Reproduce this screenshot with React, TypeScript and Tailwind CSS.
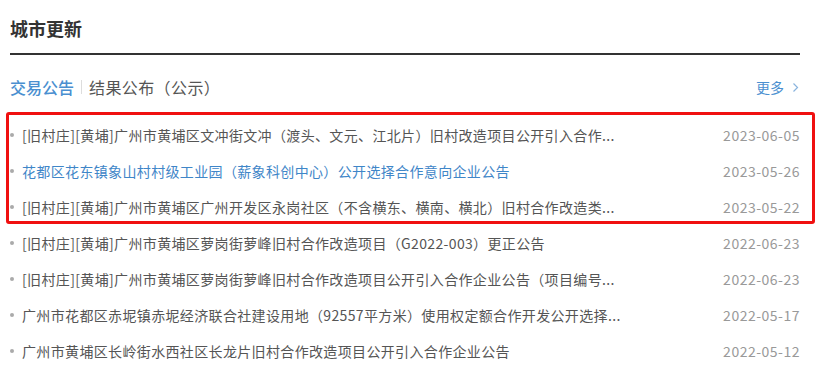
import React from 'react';

const rows = [
  { title: '[旧村庄][黄埔]广州市黄埔区文冲街文冲（渡头、文元、江北片）旧村改造项目公开引入合作...', date: '2023-06-05' },
  { title: '花都区花东镇象山村村级工业园（薪象科创中心）公开选择合作意向企业公告', date: '2023-05-26', active: true },
  { title: '[旧村庄][黄埔]广州市黄埔区广州开发区永岗社区（不含横东、横南、横北）旧村合作改造类...', date: '2023-05-22' },
  { title: '[旧村庄][黄埔]广州市黄埔区萝岗街萝峰旧村合作改造项目（G2022-003）更正公告', date: '2022-06-23' },
  { title: '[旧村庄][黄埔]广州市黄埔区萝岗街萝峰旧村合作改造项目公开引入合作企业公告（项目编号...', date: '2022-06-23' },
  { title: '广州市花都区赤坭镇赤坭经济联合社建设用地（92557平方米）使用权定额合作开发公开选择...', date: '2022-05-17' },
  { title: '广州市黄埔区长岭街水西社区长龙片旧村合作改造项目公开引入合作企业公告', date: '2022-05-12' },
];

export default function App() {
  return (
    <div
      className="w-[818px] h-[380px] bg-white overflow-hidden px-[10px]"
      style={{ fontFamily: '"Microsoft YaHei", "Noto Sans CJK SC", sans-serif' }}
    >
      <div className="w-[790px]">
        <div className="h-[53px] pt-[15px]">
          <h2 className="text-[18px] leading-[26px] font-bold text-[#333]">城市更新</h2>
        </div>
        <div className="h-[2px] bg-[#333]" />

        <div className="flex items-center justify-between h-[62px] pt-[2px]">
          <div className="flex items-center">
            <span className="text-[16px] text-[#4a8fd0] font-medium">交易公告</span>
            <span className="mx-[7px] w-px h-[14px] bg-[#ddd]" />
            <span className="text-[16px] text-[#555] tracking-[0.4px]">结果公布（公示）</span>
          </div>
          <div className="flex items-center text-[14px] text-[#4a8fd0]">
            <span>更多</span>
            <svg className="ml-[8px] mr-[1px]" width="7" height="11" viewBox="0 0 7 11" fill="none">
              <path d="M1.5 1.5 5.5 5.5 1.5 9.5" stroke="#8ab4de" strokeWidth="1.2" />
            </svg>
          </div>
        </div>

        <div className="relative">
          <div className="absolute left-[-4px] top-[-5px] w-[809px] h-[112px] border-[3px] border-[#f01010] rounded-[3px] pointer-events-none" />
          <ul>
            {rows.map((r, i) => (
              <li key={i} className="flex items-center justify-between h-[36px]">
                <div className="flex items-center min-w-0">
                  <span className="w-[4px] h-[4px] rounded-full bg-[#aaa] mr-[8px] shrink-0" />
                  <span
                    className={`text-[14px] tracking-[0.35px] whitespace-nowrap ${r.active ? 'text-[#3f86c8]' : 'text-[#555]'}`}
                  >
                    {r.title}
                  </span>
                </div>
                <span className="text-[14px] tracking-[0.5px] text-[#999] shrink-0">{r.date}</span>
              </li>
            ))}
          </ul>
        </div>
      </div>
    </div>
  );
}
